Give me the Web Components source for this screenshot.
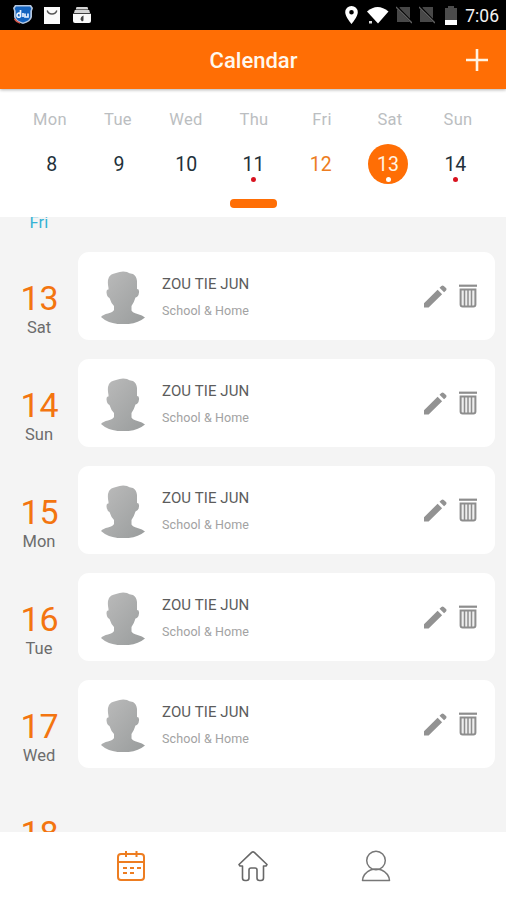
<!DOCTYPE html>
<html lang="en">
<head>
<meta charset="utf-8">
<title>Calendar</title>
<style>
  html, body { margin: 0; height: 100%; }
  body {
    font-family: Roboto, "Liberation Sans", sans-serif;
    background: #f4f4f4;
    overflow: hidden;
  }
</style>
</head>
<body>
<calendar-app></calendar-app>

<script>
/**
 * StatusBar draws the system icons and the clock.
 */
class StatusBar extends HTMLElement {
  constructor() {
    super();
    const shadow = this.attachShadow({ mode: "open" });
    shadow.innerHTML = `
      <style>
        :host { display: flex; align-items: center; height: 30px; background: #000; box-sizing: border-box; padding: 0 7px 0 12px; }
        svg { display: block; flex: none; }
        .space { flex: 1; }
        span { font-size: 17.5px; line-height: 30px; color: #f2f2f2; margin-left: 8px; padding-top: 2px; }
      </style>
      <svg width="22" height="20" viewBox="0 0 22 20">
        <path d="M3 0h16l2 3-1 3v6q-1 5-9 7-8-2-9-7V6L1 3z" fill="#b5c7df"/>
        <path d="M4 1.5h14l1.3 2-1 2.5v6q-1 4-7.3 5.5Q4.700 16 3.700 12V6l-1-2.500z" fill="#1464c0"/>
        <path d="M2.500 14q2 3 5.500 4" stroke="#d8574c" stroke-width="1.500" fill="none"/>
        <path d="M8.500 5v7M8.500 9q-3-2-3.500 1t3.500 2M11 8v4M13 8.500v3.500h3V8.500" fill="none" stroke="#e9f3ff" stroke-width="1.700"/>
      </svg>
      <svg width="16" height="17" viewBox="0 0 16 17" style="margin-left:10px">
        <path d="M0 0h16v17H0z" fill="#fafafa"/>
        <path d="M3.200 3.500q1 3.500 4.800 3.500t4.800-3.500" fill="none" stroke="#555" stroke-width="1.400"/>
      </svg>
      <svg width="18" height="17" viewBox="0 0 18 17" style="margin-left:13px">
        <path d="M3.500 0h11l.8 2.500H2.700zM1.800 3h14.400l.8 3H1z" fill="#d5d5d5"/>
        <path d="M0 6.700h18V14q0 2-2 2H2q-2 0-2-2z" fill="#fafafa"/>
        <path d="M10.500 8.500q-3 1-3 4l1.500 2q2-.5 1.500-2.500z" fill="#444"/>
      </svg>
      <div class="space"></div>
      <svg width="13" height="18" viewBox="0 0 13 18">
        <path fill-rule="evenodd" d="M6.500 0a6.300 6.300 0 0 1 6.300 6.300C12.800 11 6.500 18 6.500 18S.2 11 .2 6.300A6.300 6.300 0 0 1 6.500 0zm0 4a2.300 2.300 0 1 0 0 4.600 2.300 2.300 0 0 0 0-4.600z" fill="#fff"/>
      </svg>
      <svg width="22" height="18" viewBox="0 0 22 18" style="margin-left:9px">
        <path d="M0 5.500Q10.500-3.500 21.500 5.500L11 17.500z" fill="#fff"/>
        <path d="M2 15h3v2.500H2z" fill="#ddd"/>
      </svg>
      <svg width="16" height="18" viewBox="0 0 16 18" style="margin-left:7px">
        <path d="M4 1h10v15H1V4z" fill="#484848"/>
        <path d="M1 1l15 15.500" stroke="#000" stroke-width="2.500"/>
        <path d="M0 1l16 16" stroke="#606060" stroke-width="1.300"/>
      </svg>
      <svg width="16" height="18" viewBox="0 0 16 18" style="margin-left:7px">
        <path d="M4 1h10v15H1V4z" fill="#484848"/>
        <path d="M1 1l15 15.500" stroke="#000" stroke-width="2.500"/>
        <path d="M0 1l16 16" stroke="#606060" stroke-width="1.300"/>
      </svg>
      <svg width="12" height="19" viewBox="0 0 12 19" style="margin-left:10px">
        <path d="M3 0h6v2h3v12H0V2h3z" fill="#4c4c4c"/>
        <path d="M0 14h12v5H0z" fill="#fff"/>
      </svg>
      <span>7:06</span>
    `;
  }
}

/**
 * AppHeader is the title bar with the add button.
 */
class AppHeader extends HTMLElement {
  constructor() {
    super();
    const shadow = this.attachShadow({ mode: "open" });
    shadow.innerHTML = `
      <style>
        :host {
          display: grid; grid-template-columns: 61px 1fr 60px; align-items: center;
          height: 59px; background: #ff6e05; color: #fff8ee;
          box-shadow: 0 1px 3px rgba(0, 0, 0, .3); z-index: 1;
        }
        h1 { grid-column: 2; margin: 0; padding-top: 3px; text-align: center; font-size: 22px; line-height: 28px; font-weight: 500; }
        svg { display: block; margin-left: 20px; }
      </style>
      <h1><slot></slot></h1>
      <svg width="22" height="22" viewBox="0 0 22 22"><path d="M11 0v22M0 11h22" stroke="#fff3e2" stroke-width="2.600"/></svg>
    `;
  }
}

/**
 * WeekStrip shows one week, with a dot under the days that have an entry.
 */
class WeekStrip extends HTMLElement {
  constructor() {
    super();
    const days = [
      ["Mon", 8], ["Tue", 9], ["Wed", 10], ["Thu", 11, "dot"],
      ["Fri", 12, "today"], ["Sat", 13, "dot selected"], ["Sun", 14, "dot"],
    ];
    const shadow = this.attachShadow({ mode: "open" });
    shadow.innerHTML = `
      <style>
        :host { display: flex; flex-direction: column; height: 128px; background: #fff; }
        .names, .dates { display: grid; grid-template-columns: repeat(7, 1fr); text-align: center; }
        .names { padding: 21px 14px 0 16px; font-size: 16.500px; line-height: 20px; letter-spacing: .3px; color: #bbbec1; }
        .dates { padding: 14px 17px 0 18px; justify-items: center; }
        .date {
          display: flex; flex-direction: column; align-items: center; box-sizing: border-box;
          width: 40px; height: 40px; padding-top: 9px; border-radius: 50%;
          font-size: 19.500px; line-height: 24px; color: #22303a;
        }
        .today { color: #ed7d21; }
        .selected { background: #ff6e05; color: #fff3e2; }
        .dot::after { content: ""; width: 5px; height: 5px; border-radius: 50%; background: #d8121f; }
        .selected::after { background: #fff; }
        .handle { width: 47px; height: 9px; margin: 15px 0 0 230px; border-radius: 4px; background: #ff6e05; }
      </style>
      <div class="names">${days.map(([name]) => `<span>${name}</span>`).join("")}</div>
      <div class="dates">${days.map(([, date, state]) => `<span class="date ${state || ""}">${date}</span>`).join("")}</div>
      <div class="handle"></div>
    `;
  }
}

/**
 * ScheduleRow is a day label followed by the card of that day.
 */
class ScheduleRow extends HTMLElement {
  constructor() {
    super();
    const shadow = this.attachShadow({ mode: "open" });
    shadow.innerHTML = `
      <style>
        :host { display: grid; grid-template-columns: 78px 1fr; flex: none; height: 88px; margin: 0 11px 19px 0; }
        .day { display: flex; flex-direction: column; align-items: center; padding-top: 29px; }
        .number { padding-left: 1px; font-size: 34px; line-height: 34px; color: #f37510; }
        .name { margin-top: 3px; font-size: 16.500px; line-height: 20px; color: #6c6c6c; }
      </style>
      <div class="day">
        <span class="number">${this.getAttribute("date")}</span>
        <span class="name">${this.getAttribute("day")}</span>
      </div>
      <slot></slot>
    `;
  }
}

/**
 * PersonCard holds the avatar, the name, the place and the row actions.
 */
class PersonCard extends HTMLElement {
  constructor() {
    super();
    const shadow = this.attachShadow({ mode: "open" });
    shadow.innerHTML = `
      <style>
        :host { display: flex; align-items: center; box-sizing: border-box; height: 88px; padding: 0 18px 0 23px; border-radius: 11px; background: #fff; }
        svg { display: block; flex: none; }
        .text { flex: 1; margin-left: 17px; }
        .name { font-size: 15px; line-height: 20px; letter-spacing: .1px; color: #5c5c5c; }
        .place { margin-top: 8px; margin-bottom: -1px; font-size: 12.500px; line-height: 18px; letter-spacing: .1px; color: #a2a2a2; }
        .trash { margin-left: 12px; }
      </style>
      <svg width="44" height="56" viewBox="0 0 44 56">
        <defs><linearGradient id="tone" x1="0" y1="0" x2="1" y2="1"><stop stop-color="#bcbcbc"/><stop offset="1" stop-color="#999c9c"/></linearGradient></defs>
        <path fill="url(#tone)" d="M7.500 20Q6 13 8 9q1.500-3 7-4 6-2.500 11-1 2 1.500 6 2 3.500 2 4 7v8q2.500 0 2 3.500-.5 4.500-3.500 5-1.500 5-4 8.500v4.500q1 2 6 3.500 5 1 7.500 3.500-8 6.800-22 6.800T0 49q2-2.500 7-3.500 5-1.500 6-3.500V38q-3-3-4.500-8-2.500-1-3-5.500 0-3.500 2-3z"/>
      </svg>
      <div class="text">
        <div class="name"><slot name="name"></slot></div>
        <div class="place"><slot name="place"></slot></div>
      </div>
      <svg width="23" height="23" viewBox="0 0 23 23">
        <path fill="#929292" d="M0 18.300L13.600 4.700l4.500 4.500L4.600 22.500H0zM15.500 2.800L17.400.9q1.200-1 2.400 0l2.200 2.200q1 1.200 0 2.300l-1.900 1.900z"/>
      </svg>
      <svg class="trash" width="18" height="24" viewBox="0 0 18 24">
        <path d="M0 1.700h18" stroke="#8d8d8d" stroke-width="2.200"/>
        <path d="M1.600 5.500h14.800v15q0 2-2 2H3.600q-2 0-2-2z" fill="#eee" stroke="#8d8d8d" stroke-width="2"/>
        <path d="M5.500 6v16M9 6v16M12.500 6v16" stroke="#8d8d8d" stroke-width="1.500"/>
      </svg>
    `;
  }
}

/**
 * TabBar is the bottom navigation.
 */
class TabBar extends HTMLElement {
  constructor() {
    super();
    const shadow = this.attachShadow({ mode: "open" });
    shadow.innerHTML = `
      <style>
        :host { display: grid; grid-template-columns: repeat(3, 122.500px); justify-content: center; justify-items: center; align-items: center; box-sizing: border-box; height: 68px; background: #fff; }
        svg { display: block; fill: none; }
      </style>
      <svg width="30" height="32" viewBox="0 0 30 32" stroke="#ed7d21" stroke-width="2">
        <rect x="2" y="4" width="26" height="26" rx="3"/>
        <path d="M2 12h26M10 1v6M20.500 1v6"/>
        <path stroke-dasharray="4 3" d="M7 18h18M7 23h11"/>
      </svg>
      <svg width="32" height="32" viewBox="0 0 32 32" stroke="#686868" stroke-width="1.600" stroke-linejoin="round">
        <path d="M14.700 2.400q1.300-1.200 2.600 0L30 14.500l-1 1.500h-2.500v12q0 2.500-2.500 2.500h-1.500q-2.500 0-2.500-2.500v-8q0-2-2-2h-4q-2 0-2 2v8q0 2.500-2.500 2.500H8Q5.500 30.500 5.500 28V16H3l-1-1.500z"/>
      </svg>
      <svg width="30" height="32" viewBox="0 0 30 32" stroke="#777" stroke-width="1.500">
        <circle cx="15" cy="10.500" r="9.300"/>
        <path stroke-linejoin="round" d="M1.500 30.500q.5-7 8-10.500 5.500-2 11 0 7.500 3.500 8 10.500z"/>
      </svg>
    `;
  }
}

/**
 * CalendarApp puts the bars, the week and the day list together.
 */
class CalendarApp extends HTMLElement {
  constructor() {
    super();
    const rows = [[13, "Sat"], [14, "Sun"], [15, "Mon"], [16, "Tue"], [17, "Wed"]];
    const shadow = this.attachShadow({ mode: "open" });
    shadow.innerHTML = `
      <style>
        :host { display: flex; flex-direction: column; width: 506px; height: 900px; overflow: hidden; }
        .list { display: flex; flex-direction: column; flex: 1; min-height: 0; overflow: hidden; background: #f4f4f4; }
        .previous { flex: none; width: 78px; height: 35px; text-align: center; font-size: 16.500px; line-height: 11px; letter-spacing: .2px; color: #35b2d4; }
      </style>
      <status-bar></status-bar>
      <app-header>Calendar</app-header>
      <week-strip></week-strip>
      <div class="list">
        <div class="previous">Fri</div>
        ${rows.map(([date, day]) => `
          <schedule-row date="${date}" day="${day}">
            <person-card>
              <span slot="name">ZOU TIE JUN</span>
              <span slot="place">School &amp; Home</span>
            </person-card>
          </schedule-row>`).join("")}
        <schedule-row date="18" day=""></schedule-row>
      </div>
      <tab-bar></tab-bar>
    `;
  }
}

window.customElements.define("status-bar", StatusBar);
window.customElements.define("app-header", AppHeader);
window.customElements.define("week-strip", WeekStrip);
window.customElements.define("schedule-row", ScheduleRow);
window.customElements.define("person-card", PersonCard);
window.customElements.define("tab-bar", TabBar);
window.customElements.define("calendar-app", CalendarApp);
</script>
</body>
</html>
